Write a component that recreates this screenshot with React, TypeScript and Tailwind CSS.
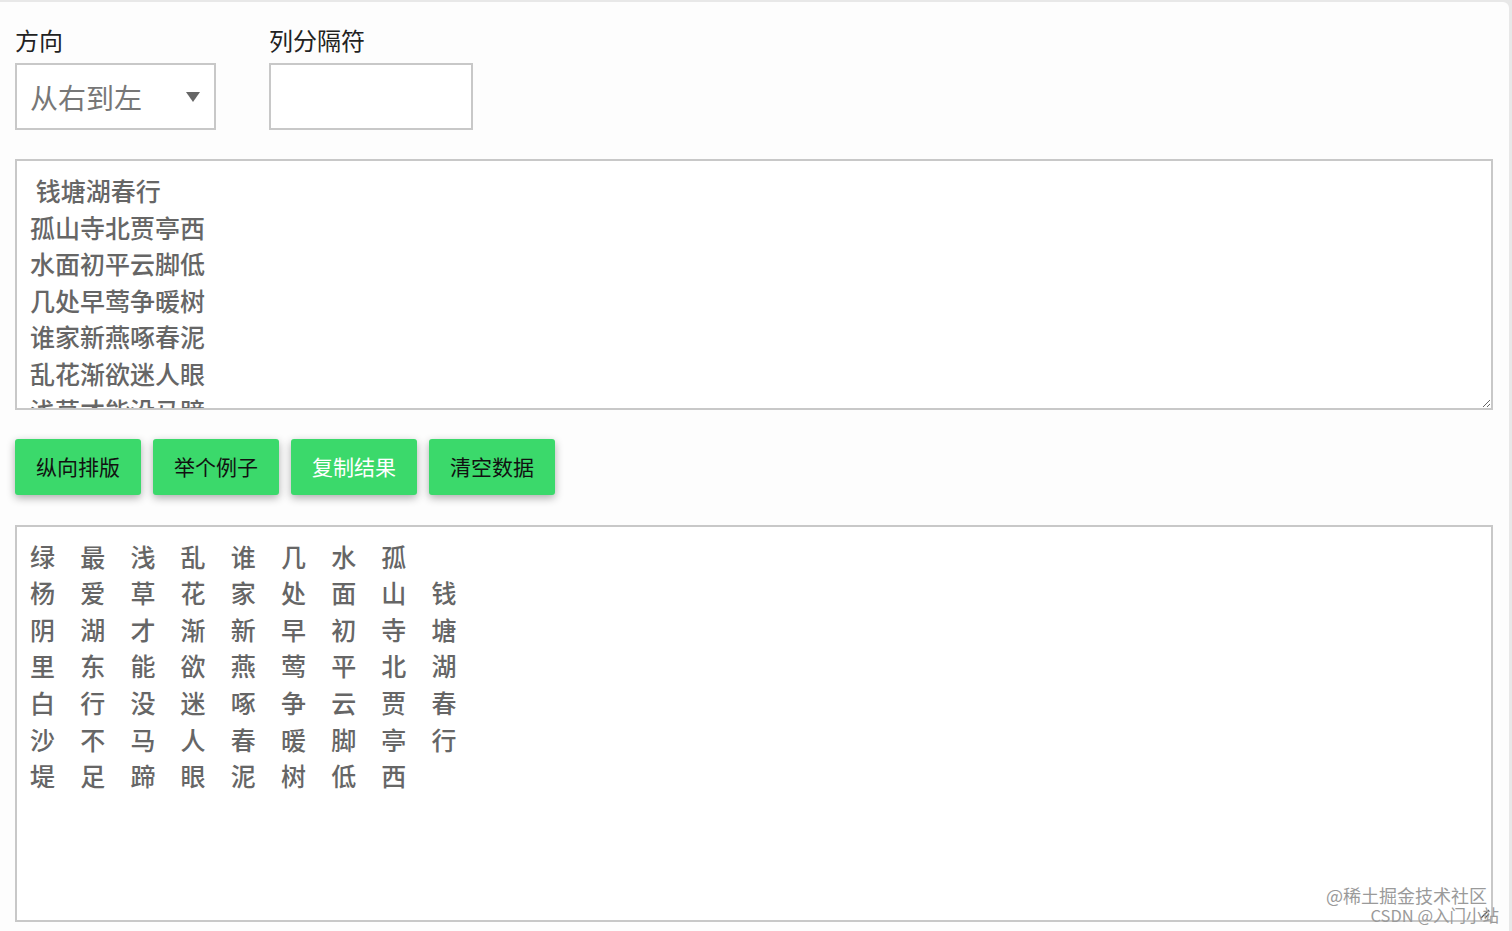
import { useState } from "react";

const SOURCE = [
  " 钱塘湖春行",
  "孤山寺北贾亭西",
  "水面初平云脚低",
  "几处早莺争暖树",
  "谁家新燕啄春泥",
  "乱花渐欲迷人眼",
  "浅草才能没马蹄",
  "最爱湖东行不足",
  "绿杨阴里白沙堤",
].join("\n");

const ROWS = [
  "绿最浅乱谁几水孤 ",
  "杨爱草花家处面山钱",
  "阴湖才渐新早初寺塘",
  "里东能欲燕莺平北湖",
  "白行没迷啄争云贾春",
  "沙不马人春暖脚亭行",
  "堤足蹄眼泥树低西 ",
];

const FONT = { fontFamily: '"Noto Sans CJK SC", "Noto Sans", sans-serif' };

export default function App() {
  const [text, setText] = useState(SOURCE);
  const [sep, setSep] = useState("");

  return (
    <div className="min-h-screen bg-[#e8e8e8] pt-[2px]" style={FONT}>
      <div className="mr-[3px] h-[929px] rounded-tr-[6px] bg-[#fdfdfd] px-[15px] pt-[20px]">
        {/* options */}
        <div className="flex gap-[53px]">
          <div className="flex flex-col">
            <label className="text-[24px] leading-[36px] text-[#222]">方向</label>
            <div className="mt-[5px] flex h-[67px] w-[201px] items-center justify-between border-2 border-[#c8c8c8] bg-white pl-[13px] pr-[14px]">
              <span className="text-[28px] text-[#777]">从右到左</span>
              <svg width="14" height="12" viewBox="0 0 14 12">
                <path d="M0 1h14L7 11z" fill="#666" />
              </svg>
            </div>
          </div>
          <div className="flex flex-col">
            <label className="text-[24px] leading-[36px] text-[#222]">列分隔符</label>
            <input
              value={sep}
              onChange={(e) => setSep(e.target.value)}
              className="mt-[5px] h-[67px] w-[204px] border-2 border-[#c8c8c8] bg-white px-[13px] text-[28px] text-[#777] outline-none"
            />
          </div>
        </div>

        {/* input */}
        <textarea
          value={text}
          onChange={(e) => setText(e.target.value)}
          className="mt-[29px] block h-[251px] w-[1478px] overflow-hidden border-2 border-[#c8c8c8] bg-white px-[13px] pt-[11px] text-[25px] leading-[36.6px] font-medium whitespace-pre text-[#666] outline-none"
        />

        {/* actions */}
        <div className="mt-[29px] flex gap-[12px]">
          {["纵向排版", "举个例子", "复制结果", "清空数据"].map((t) => (
            <button
              key={t}
              className={`h-[56px] w-[126px] rounded-[3px] bg-[#3bd96b] text-[21px] shadow-[0_3px_9px_rgba(0,0,0,0.32)] ${
                t === "复制结果" ? "text-white" : "text-[#111]"
              }`}
            >
              {t}
            </button>
          ))}
        </div>

        {/* output */}
        <div className="relative mt-[30px] h-[397px] w-[1478px] border-2 border-[#c8c8c8] bg-white px-[13px] pt-[11px]">
          {ROWS.map((row, i) => (
            <div key={i} className="flex h-[36.6px] items-center">
              {row.split("").map((c, j) => (
                <span key={j} className="w-[50.2px] text-[25px] font-medium text-[#666]">
                  {c === " " ? "\u00a0" : c}
                </span>
              ))}
            </div>
          ))}
          <svg className="absolute right-[1px] bottom-[1px]" width="12" height="12" viewBox="0 0 12 12">
            <path d="M11 3L3 11M11 7L7 11" stroke="#555" strokeWidth="1.2" />
          </svg>
          <div className="absolute right-[4px] bottom-[-5px] flex flex-col items-end text-[#9a9a9a]">
            <div className="text-[18px] leading-[20px]">@稀土掘金技术社区</div>
            <div className="mr-[-12px] text-[16.5px] leading-[20px]">CSDN @入门小站</div>
          </div>
        </div>
      </div>
    </div>
  );
}
